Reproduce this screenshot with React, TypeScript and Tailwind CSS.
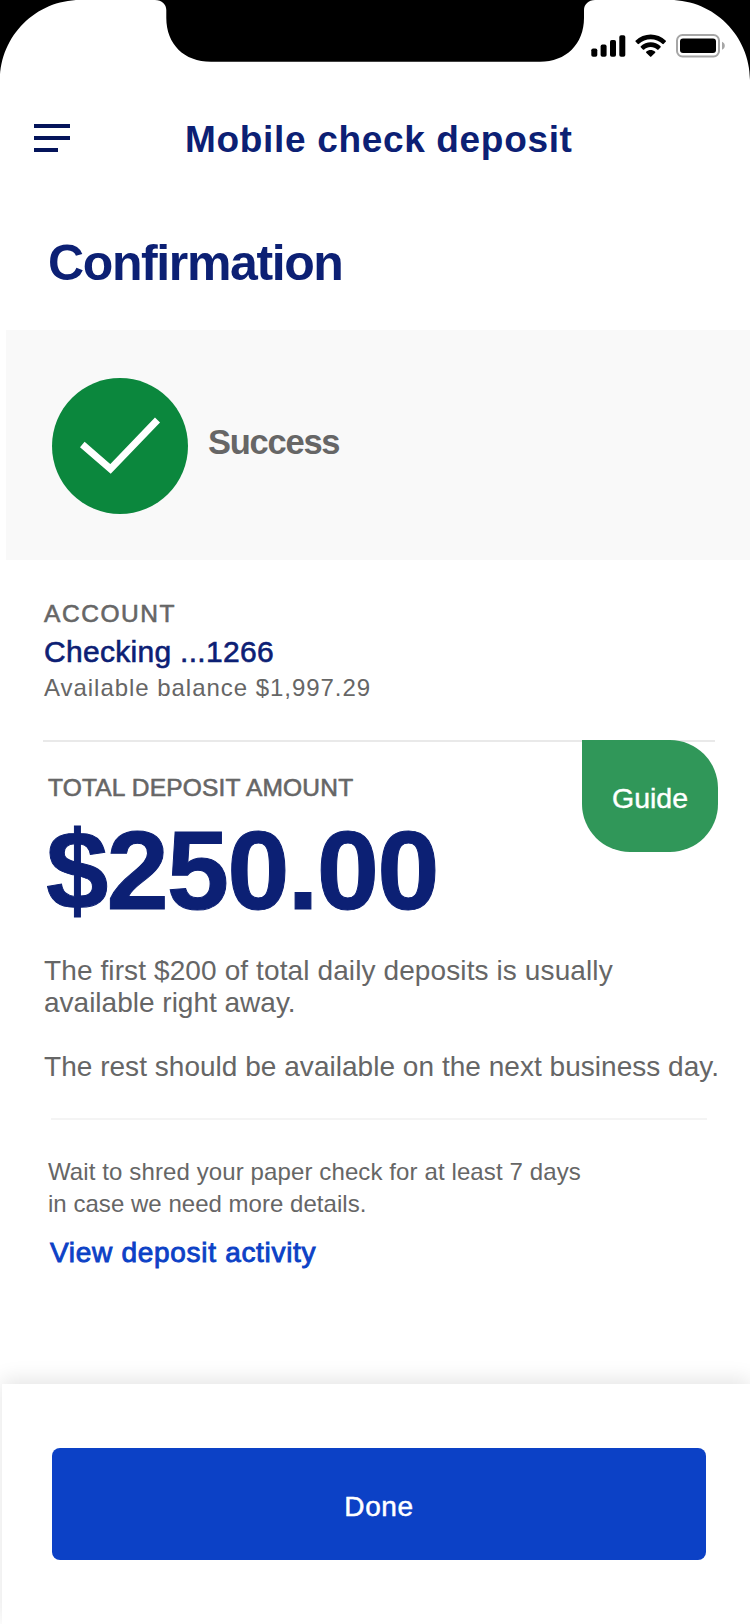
const medium = "[-webkit-text-stroke:0.6px_currentColor]";

function StatusBar() {
  return (
    <svg className="block h-[82px] w-[750px] shrink-0" viewBox="0 0 750 82">
      <path d="M0 0H80C36 0 0 36 0 80Z" fill="#000" />
      <path d="M750 0H670C714 0 750 36 750 80Z" fill="#000" />
      <path
        d="M155 0C162 0 166.300 4.500 166.300 10V18C166.300 44 184 61.800 211 61.800H540C566 61.800 584 44 584 18V10C584 4.500 588.500 0 595 0Z"
        fill="#000"
      />
      <g fill="#000">
        <rect x="591.3" y="48.5" width="6" height="8.300" rx="1.800" />
        <rect x="600.6" y="44.600" width="6" height="12.200" rx="1.800" />
        <rect x="610" y="40" width="6" height="16.800" rx="1.800" />
        <rect x="619.3" y="35.200" width="6" height="21.600" rx="1.800" />
      </g>
      <path
        transform="translate(635.3 34.3) scale(1.81 1.87)"
        d="M8.500 2.600c2.500 0 4.800.9 6.600 2.600.1.1.4.1.5 0l1.300-1.300c.1-.1.1-.4 0-.5-4.700-4.400-12.100-4.400-16.800 0-.1.1-.1.4 0 .5l1.300 1.300c.1.1.4.1.5 0 1.800-1.700 4.200-2.600 6.600-2.600zm0 4.200c1.400 0 2.700.5 3.700 1.400.1.1.4.1.5 0l1.300-1.300c.1-.1.1-.4 0-.5-3.100-2.900-7.900-2.900-11 0-.1.1-.1.4 0 .5l1.300 1.300c.1.1.4.1.5 0 1-.9 2.300-1.400 3.700-1.400zM11 9.300c.1.1.1.4 0 .5l-2.300 2.200c-.1.1-.3.1-.4 0L6 9.800c-.1-.1-.1-.4 0-.5 1.400-1.200 3.500-1.200 5 0z"
        fill="#000"
      />
      <rect x="677" y="35" width="42" height="21.500" rx="5.500" fill="none" stroke="#a6a6a6" strokeWidth="2" />
      <rect x="680" y="38.600" width="36" height="14.500" rx="3" fill="#000" />
      <path d="M722 41.700C723.700 42.400 724.800 43.900 724.800 45.700S723.700 49 722 49.700Z" fill="#a6a6a6" />
    </svg>
  );
}

function MenuIcon() {
  return (
    <svg className="h-7 w-9 shrink-0" viewBox="0 0 36 28" fill="#04145a">
      <rect width="36" height="4" />
      <rect y="12" width="36" height="4" />
      <rect y="24" width="24" height="4" />
    </svg>
  );
}

function SuccessIcon() {
  return (
    <svg className="h-[136px] w-[136px] shrink-0" viewBox="0 0 136 136">
      <circle cx="68" cy="68" r="68" fill="#0b873d" />
      <path d="M30.300 66.500L58.500 91L105.500 42" fill="none" stroke="#fff" strokeWidth="7" />
    </svg>
  );
}

export default function App() {
  return (
    <div className="flex h-[1624px] w-[750px] flex-col overflow-hidden bg-white font-['Liberation_Sans',Arial,sans-serif] text-[#666]">
      <StatusBar />

      <header className="mt-7 flex h-14 shrink-0 items-center pl-[34px]">
        <MenuIcon />
        <h1 className="mt-[4px] ml-[115px] text-[37px] leading-[44px] font-bold tracking-[0.67px] whitespace-nowrap text-[#0c2074]">
          Mobile check deposit
        </h1>
      </header>

      <h2 className="mt-[67px] pl-12 text-[50px] leading-[60px] font-bold tracking-[-1.38px] text-[#0c2074]">
        Confirmation
      </h2>

      <section className="mt-[37px] ml-[6px] flex h-[230px] shrink-0 items-start bg-[#f9f9f9] pt-12 pl-[46px]">
        <SuccessIcon />
        <p className="mt-11 ml-5 text-[34.5px] leading-10 font-bold tracking-[-1.25px]">Success</p>
      </section>

      <section className="mt-[39px] pl-11">
        <p className={`text-[24.5px] leading-[30px] tracking-[1.55px] ${medium}`}>ACCOUNT</p>
        <p className={`mt-[5px] text-[30px] leading-9 tracking-[0.3px] text-[#0c2074] ${medium}`}>
          Checking ...1266
        </p>
        <p className="mt-[3px] text-[24px] leading-[30px] tracking-[0.96px]">Available balance $1,997.29</p>
      </section>

      <hr className="mt-[37px] ml-[43px] h-[2px] w-[672px] shrink-0 border-0 bg-[#e9e9e9]" />
      <section className="ml-[43px] flex h-[185px] w-[675px] shrink-0 items-start justify-between">
        <div className="pt-[31px] pl-[5px]">
          <p className={`text-[24.5px] leading-[30px] tracking-[0.2px] whitespace-nowrap ${medium}`}>
            TOTAL DEPOSIT AMOUNT
          </p>
          <p className="mt-[12px] -ml-[2px] text-[112px] leading-[112px] font-bold tracking-[-1.9px] text-[#0c2074] [-webkit-text-stroke:1px_#0c2074]">
            $250.00
          </p>
        </div>
        <button className="-mt-[2px] h-28 w-[136px] shrink-0 rounded-[48px] rounded-tl-none bg-[#309759] pt-1 text-[28.5px] text-white [-webkit-text-stroke:0.4px_white]">
          Guide
        </button>
      </section>

      <section className="mt-[28px] pl-11 text-[28px] leading-8 whitespace-nowrap">
        <p>
          <span className="tracking-[0.11px]">The first $200 of total daily deposits is usually</span>
          <br />
          available right away.
        </p>
        <p className="mt-8 tracking-[0.03px]">The rest should be available on the next business day.</p>
      </section>

      <hr className="mt-[35px] ml-[51px] h-[2px] w-[656px] shrink-0 border-0 bg-[#f4f4f4]" />

      <section className="mt-9 pl-12">
        <p className="text-[24px] leading-8">
          <span className="tracking-[0.11px]">Wait to shred your paper check for at least 7 days</span>
          <br />
          <span className="tracking-[0.03px]">in case we need more details.</span>
        </p>
        <a className="mt-[17px] ml-[2px] block text-[28px] leading-8 tracking-[0.7px] text-[#0c41c6] [-webkit-text-stroke:0.9px_#0c41c6]">
          View deposit activity
        </a>
      </section>

      <footer className="mt-auto ml-[2px] h-60 shrink-0 bg-white pt-16 pl-[50px] shadow-[0_-4px_20px_rgba(0,0,0,0.11)]">
        <button className="h-28 w-[654px] rounded-lg bg-[#0c41c6] pt-[6px] text-[28px] tracking-[0.6px] text-white [-webkit-text-stroke:0.5px_white]">
          Done
        </button>
      </footer>
    </div>
  );
}
